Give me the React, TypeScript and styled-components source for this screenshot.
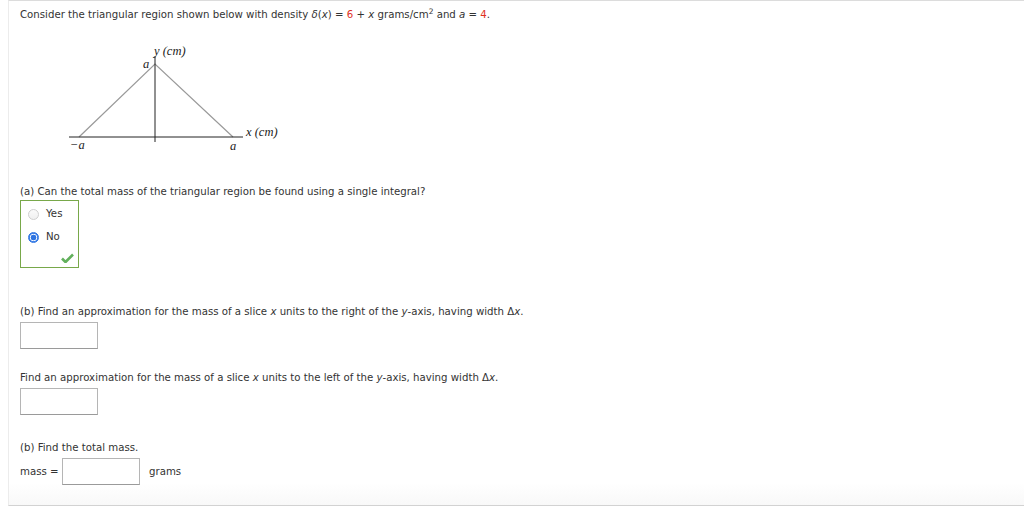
import React from "react";
import styled, { createGlobalStyle } from "styled-components";

const Global = createGlobalStyle`
  html, body { margin: 0; padding: 0; background: #fff; }
  body { padding-left: 8px; font-family: "DejaVu Sans", Verdana, sans-serif; }
`;

const Frame = styled.div`
  box-sizing: border-box;
  height: 506px;
  border-top: 1px solid #dcdcdc;
  border-left: 1px solid #ececec;
  border-bottom: 1px solid #d2d2d2;
  padding: 7px 0 0 11px;
  background: linear-gradient(to bottom, #fff 0, #fff 482px, #f8f8f8 505px);
  color: #333;
  font-size: 10.2px;
  line-height: 14px;
`;

const Line = styled.div<{ $top?: number }>`
  margin-top: ${(p) => p.$top ?? 0}px;
  white-space: nowrap;
`;

const Red = styled.span`
  color: #e0301e;
`;

const Var = styled.i`
  font-family: "DejaVu Sans", Verdana, sans-serif;
`;

const Sup = styled.sup`
  font-size: 7.5px;
  line-height: 0;
`;

const Figure = styled.svg`
  display: block;
  margin-top: 18px;
`;

const ChoiceBox = styled.div`
  box-sizing: border-box;
  width: 59px;
  height: 68px;
  margin-top: 1px;
  border: 1px solid #78a84a;
  padding: 6px 0 0 7px;
  position: relative;
`;

const Choice = styled.label`
  display: flex;
  align-items: center;
  gap: 7px;
  height: 14px;
  margin-bottom: 9px;
`;

const Radio = styled.span<{ $on?: boolean }>`
  box-sizing: border-box;
  width: 11px;
  height: 11px;
  border-radius: 50%;
  border: 1px solid ${(p) => (p.$on ? "#2f74e0" : "#cfcfcf")};
  background: ${(p) =>
    p.$on
      ? "radial-gradient(circle, #2f74e0 0 2.6px, #fff 3.2px 3.4px, #3f82ea 3.9px)"
      : "linear-gradient(#fafafa, #f0f0f0)"};
`;

const Check = styled.svg`
  position: absolute;
  right: 4px;
  bottom: 4px;
`;

const AnswerBox = styled.div<{ $w?: number }>`
  box-sizing: border-box;
  width: ${(p) => p.$w ?? 78}px;
  height: 27px;
  border: 1px solid #b5b5b5;
  border-bottom-color: #9a9a9a;
  background: #fff;
`;

const Row = styled.div`
  display: flex;
  align-items: center;
  margin-top: 3px;
`;

const RowLabel = styled.span`
  width: 42px;
`;

const Unit = styled.span`
  margin-left: 9px;
`;

const Label = styled.text`
  font-family: "Liberation Serif", "DejaVu Serif", serif;
  font-style: italic;
  font-size: 12.5px;
  fill: #222;
`;

export default function App() {
  return (
    <>
      <Global />
      <Frame>
        <Line>
          Consider the triangular region shown below with density <Var>δ</Var>(<Var>x</Var>) = <Red>6</Red> +{" "}
          <Var>x</Var> grams/cm<Sup>2</Sup> and <Var>a</Var> = <Red>4</Red>.
        </Line>
        <Figure width="270" height="116" viewBox="0 0 270 116">
          <polyline points="59,97 135,24 213,97" fill="none" stroke="#9a9a9a" strokeWidth="1.2" />
          <line x1="49" y1="97" x2="223" y2="97" stroke="#222" strokeWidth="1" />
          <line x1="135" y1="16" x2="135" y2="102" stroke="#222" strokeWidth="1" />
          <Label x="134" y="15">y (cm)</Label>
          <Label x="123" y="28">a</Label>
          <Label x="50" y="109">−a</Label>
          <Label x="210" y="110">a</Label>
          <Label x="226" y="96">x (cm)</Label>
        </Figure>
        <Line $top={29}>(a) Can the total mass of the triangular region be found using a single integral?</Line>
        <ChoiceBox>
          <Choice>
            <Radio />
            Yes
          </Choice>
          <Choice>
            <Radio $on />
            No
          </Choice>
          <Check width="13" height="10" viewBox="0 0 13 10">
            <path d="M1 5.5 L4.5 9 L12 1.5" fill="none" stroke="#62b05c" strokeWidth="2.6" strokeLinejoin="round" />
          </Check>
        </ChoiceBox>
        <Line $top={37}>
          (b) Find an approximation for the mass of a slice <Var>x</Var> units to the right of the <Var>y</Var>-axis, having
          width Δ<Var>x</Var>.
        </Line>
        <Line $top={3}>
          <AnswerBox />
        </Line>
        <Line $top={22}>
          Find an approximation for the mass of a slice <Var>x</Var> units to the left of the <Var>y</Var>-axis, having width
          Δ<Var>x</Var>.
        </Line>
        <Line $top={3}>
          <AnswerBox />
        </Line>
        <Line $top={26}>(b) Find the total mass.</Line>
        <Row>
          <RowLabel>mass =</RowLabel>
          <AnswerBox />
          <Unit>grams</Unit>
        </Row>
      </Frame>
    </>
  );
}
